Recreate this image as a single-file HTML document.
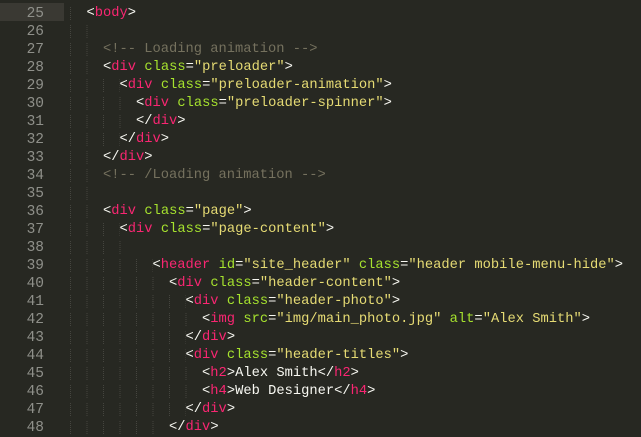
<!DOCTYPE html>
<html><head><style>
html,body{margin:0;padding:0;background:#272822;width:641px;height:437px;overflow:hidden}
#w{position:absolute;top:5px;left:0;width:641px;font-family:"Liberation Mono",monospace;font-size:13.75px;line-height:18px;color:#f8f8f2}
.l{height:18px;position:relative}
.n{position:absolute;left:0;width:44px;text-align:right;color:#8f908a;font-size:14.5px}
.c{position:absolute;left:70px;white-space:pre}
.hl{background:#3a3933;position:absolute;left:0;width:64px;height:18px;top:-2px}
.i{background-image:linear-gradient(#272822 50%,transparent 50%),linear-gradient(to right,#45453f 1px,transparent 1px);background-size:100% 2px,16.5px 100%}
.t{color:#f92672}.a{color:#a6e22e}.s{color:#e6db74}.m{color:#75715e}
</style></head><body><div id="w"><div class="l"><div class="hl"></div><span class="n">25</span><span class="c"><span class="i">  </span>&lt;<span class="t">body</span>&gt;</span></div><div class="l"><span class="n">26</span><span class="c"><span class="i">    </span></span></div><div class="l"><span class="n">27</span><span class="c"><span class="i">    </span><span class="m">&lt;!-- Loading animation --&gt;</span></span></div><div class="l"><span class="n">28</span><span class="c"><span class="i">    </span>&lt;<span class="t">div</span> <span class="a">class</span>=<span class="s">"preloader"</span>&gt;</span></div><div class="l"><span class="n">29</span><span class="c"><span class="i">      </span>&lt;<span class="t">div</span> <span class="a">class</span>=<span class="s">"preloader-animation"</span>&gt;</span></div><div class="l"><span class="n">30</span><span class="c"><span class="i">        </span>&lt;<span class="t">div</span> <span class="a">class</span>=<span class="s">"preloader-spinner"</span>&gt;</span></div><div class="l"><span class="n">31</span><span class="c"><span class="i">        </span>&lt;/<span class="t">div</span>&gt;</span></div><div class="l"><span class="n">32</span><span class="c"><span class="i">      </span>&lt;/<span class="t">div</span>&gt;</span></div><div class="l"><span class="n">33</span><span class="c"><span class="i">    </span>&lt;/<span class="t">div</span>&gt;</span></div><div class="l"><span class="n">34</span><span class="c"><span class="i">    </span><span class="m">&lt;!-- /Loading animation --&gt;</span></span></div><div class="l"><span class="n">35</span><span class="c"><span class="i">    </span></span></div><div class="l"><span class="n">36</span><span class="c"><span class="i">    </span>&lt;<span class="t">div</span> <span class="a">class</span>=<span class="s">"page"</span>&gt;</span></div><div class="l"><span class="n">37</span><span class="c"><span class="i">      </span>&lt;<span class="t">div</span> <span class="a">class</span>=<span class="s">"page-content"</span>&gt;</span></div><div class="l"><span class="n">38</span><span class="c"><span class="i">        </span></span></div><div class="l"><span class="n">39</span><span class="c"><span class="i">          </span>&lt;<span class="t">header</span> <span class="a">id</span>=<span class="s">"site_header"</span> <span class="a">class</span>=<span class="s">"header mobile-menu-hide"</span>&gt;</span></div><div class="l"><span class="n">40</span><span class="c"><span class="i">            </span>&lt;<span class="t">div</span> <span class="a">class</span>=<span class="s">"header-content"</span>&gt;</span></div><div class="l"><span class="n">41</span><span class="c"><span class="i">              </span>&lt;<span class="t">div</span> <span class="a">class</span>=<span class="s">"header-photo"</span>&gt;</span></div><div class="l"><span class="n">42</span><span class="c"><span class="i">                </span>&lt;<span class="t">img</span> <span class="a">src</span>=<span class="s">"img/main_photo.jpg"</span> <span class="a">alt</span>=<span class="s">"Alex Smith"</span>&gt;</span></div><div class="l"><span class="n">43</span><span class="c"><span class="i">              </span>&lt;/<span class="t">div</span>&gt;</span></div><div class="l"><span class="n">44</span><span class="c"><span class="i">              </span>&lt;<span class="t">div</span> <span class="a">class</span>=<span class="s">"header-titles"</span>&gt;</span></div><div class="l"><span class="n">45</span><span class="c"><span class="i">                </span>&lt;<span class="t">h2</span>&gt;Alex Smith&lt;/<span class="t">h2</span>&gt;</span></div><div class="l"><span class="n">46</span><span class="c"><span class="i">                </span>&lt;<span class="t">h4</span>&gt;Web Designer&lt;/<span class="t">h4</span>&gt;</span></div><div class="l"><span class="n">47</span><span class="c"><span class="i">              </span>&lt;/<span class="t">div</span>&gt;</span></div><div class="l"><span class="n">48</span><span class="c"><span class="i">            </span>&lt;/<span class="t">div</span>&gt;</span></div></div></body></html>
